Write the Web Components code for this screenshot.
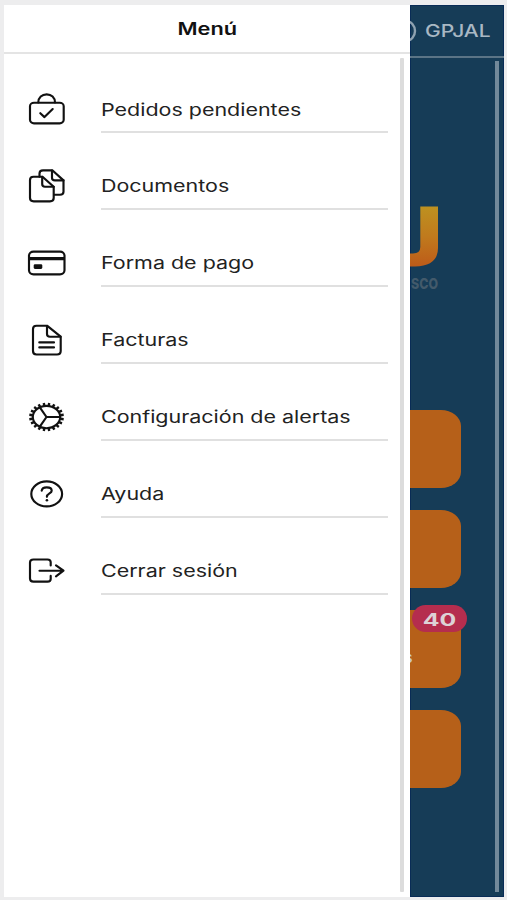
<!DOCTYPE html>
<html lang="es">
<head>
<meta charset="utf-8">
<title>Menú</title>
<style>
html,body{margin:0;height:100%}
body{background:#ededee;font-family:Inter,"Liberation Sans",sans-serif;overflow:hidden}
</style>
</head>
<body>
<app-shell>
  <side-drawer slot="drawer" heading="Menú">
    <menu-item icon="bag" style="--dy:.8px">Pedidos pendientes</menu-item>
    <menu-item icon="docs">Documentos</menu-item>
    <menu-item icon="card">Forma de pago</menu-item>
    <menu-item icon="file">Facturas</menu-item>
    <menu-item icon="gear">Configuración de alertas</menu-item>
    <menu-item icon="help">Ayuda</menu-item>
    <menu-item icon="exit">Cerrar sesión</menu-item>
  </side-drawer>
  <home-page slot="page">
    <home-tile></home-tile>
    <home-tile></home-tile>
    <home-tile badge="40">s</home-tile>
    <home-tile></home-tile>
  </home-page>
</app-shell>
<script>
const icons = {
  bag: '<rect x="3" y="12.7" width="33.7" height="20.6" rx="4" ry="3.5"/><path d="M11.3 12.5C11.3 7.500 15 4.300 19.700 4.300S28 7.500 28 12.500"/><path d="M13.300 23.200l4.200 3.900 8.200-8"/>',
  docs: '<path d="M12.500 9.700V6.500Q12.500 3.300 16 3.300H25.300L36.500 13.400V24.700Q36.500 27.700 33 27.700H27"/><path d="M25 3.500V10.700Q25 13.400 28 13.400H36.500"/><path d="M6.500 9.700H15.500L26.700 19.700V31Q26.700 34.300 23 34.300H6.700Q3 34.300 3 31V13Q3 9.700 6.500 9.700Z"/><path d="M15.200 9.900V17Q15.200 19.700 18 19.700H26.700"/>',
  card: '<rect x="2" y="7.600" width="35.500" height="22.700" rx="4.500" ry="4"/><path d="M2 14.600H37.500" stroke-width="3.400" stroke-linecap="butt"/><rect x="6.700" y="20.300" width="8.600" height="4.600" rx="1.300" fill="#111" stroke="none"/>',
  file: '<path d="M9.500 4.700H20L33.700 15.700V30Q33.700 33.500 30 33.500H9.500Q6 33.500 6 30V8Q6 4.700 9.500 4.700Z"/><path d="M20 5V13Q20 15.700 23 15.700H33.500M12.300 21.400H27M12.300 26.400H27"/>',
  gear: '<ellipse cx="19.500" cy="19" rx="13.700" ry="11.200"/><path d="M19.500 19H33M19.500 19L12.800 9.300M19.500 19L12.800 28.700"/>' +
    Array.from({length:20},(_,i)=>{const a=i*Math.PI/10+.157,c=Math.cos(a),s=Math.sin(a);
      return `<path stroke-width="2.400" stroke-linecap="butt" d="M${19.5+14*c} ${19+11.5*s}L${19.5+17.4*c} ${19+14.2*s}"/>`}).join(''),
  help: '<ellipse cx="19.700" cy="18.900" rx="15.400" ry="12.500"/><path d="M14.700 15.700C15 13.300 17.200 12.300 19.700 12.300C22.500 12.300 24.700 13.500 24.700 15.700C24.700 18.600 19.900 18.300 19.900 21.800"/><circle cx="19.900" cy="25.300" r="1.300" fill="#111" stroke="none"/>',
  exit: '<path d="M23.700 13.500V10.300Q23.700 7.500 20.500 7.500H6.500Q3 7.500 3 10.500V26.500Q3 29.600 6.500 29.600H20.500Q23.700 29.600 23.700 27V23.900M12.500 18.700H36M29 13.300L36.500 18.700L29 24.300"/>'
};
function define(name, render) {
  customElements.define(name, class extends HTMLElement {
    connectedCallback() {
      if (!this.shadowRoot) this.attachShadow({mode:'open'}).innerHTML = render(this);
    }
  });
}
define('app-shell', () => `<style>
  :host{display:grid;box-sizing:border-box;width:507px;height:900px;padding:5px 3px 3px 4px;grid-template-columns:406px 1fr}
  ::slotted(*){min-width:0}
</style><slot name="drawer"></slot><slot name="page"></slot>`);
define('side-drawer', el => `<style>
  :host{display:flex;flex-direction:column;height:892px;background:#fff}
  header{display:flex;justify-content:center;align-items:center;height:47px;border-bottom:2px solid #e4e4e4;font-size:17px;font-weight:600;color:#111}
  header span{transform:scaleX(1.28)}
  .body{display:flex;flex:1;padding:2px 6px 5px 0}
  nav{flex:1}
  .bar{width:4px;margin-top:2px;background:#dcdcdc;border-radius:1px}
</style><header><span>${el.getAttribute('heading')}</span></header>
<div class="body"><nav><slot></slot></nav><div class="bar"></div></div>`);
define('menu-item', el => `<style>
  :host{display:grid;grid-template-columns:40px 287px;column-gap:34px;padding-left:23px;height:77px;box-sizing:border-box}
  svg{display:block;margin-top:34px;fill:none;stroke:#111;stroke-width:2.150;stroke-linecap:round;stroke-linejoin:round}
  .label{display:flex;align-items:center;box-sizing:border-box;height:77px;padding-top:31px;border-bottom:2px solid #e0e0e0;font-size:17px;color:#222;white-space:nowrap}
  .label span{transform:translateY(var(--dy,0px)) scaleX(1.262);transform-origin:0 50%}
</style><svg width="40" height="40" viewBox="0 0 40 40">${icons[el.getAttribute('icon')]}</svg>
<div class="label"><span><slot></slot></span></div>`);
define('home-page', () => `<style>
  :host{display:flex;flex-direction:column;position:relative;overflow:hidden;width:94px;height:892px;background:#163c57;box-shadow:inset 0 0 0 1px #092c56}
  header{display:flex;align-items:center;box-sizing:border-box;height:53px;padding-top:1px;border-bottom:2px solid #5b7486;color:#a9b8c4;font-size:17px;font-weight:500}
  header svg{width:15px;height:24px;flex:none}
  header span{transform:scaleX(1.235);transform-origin:0 50%}
  .logo{height:352px;box-sizing:border-box;padding-top:148px}
  .logo svg{display:block}
  .tiles{display:flex;flex-direction:column;gap:22px;width:51px}
  .bar{position:absolute;right:5px;top:56px;width:4px;height:831px;background:#72899a}
</style><header><svg viewBox="0 0 15 24"><ellipse cx="-4" cy="12" rx="9" ry="10" fill="none" stroke="#8fa2b1" stroke-width="2.400"/></svg><span>GPJAL</span></header>
<div class="logo"><svg width="60" height="90" viewBox="0 0 60 90"><defs><linearGradient id="g" x1="0" y1="0" x2="0" y2="1"><stop offset="0" stop-color="#bd9120"/><stop offset=".5" stop-color="#c07a1d"/><stop offset="1" stop-color="#bd5b19"/></linearGradient></defs>
<path d="M10.300 .500H28V42Q28 60 5 60.500H0V47.500H3Q10.300 47.500 10.300 41Z" fill="url(#g)"/>
<text x="1" y="82.500" font-family="Inter,sans-serif" font-size="14.500" font-weight="800" fill="#435a6b" textLength="27" lengthAdjust="spacingAndGlyphs">SCO</text></svg></div>
<div class="tiles"><slot></slot></div><div class="bar"></div>`);
define('home-tile', el => `<style>
  :host{display:flex;align-items:center;position:relative;width:51px;height:78px;background:#b66019;border-radius:0 20px 20px 0/0 16px 16px 0;color:#cfc8c2;font-size:16px;font-weight:500}
  .text{margin:16px 0 0 -6px}
  .badge{position:absolute;left:2px;top:-5px;width:55px;height:27px;border-radius:14px;background:#b52d4e;color:#ddd2d6;font-size:17px;font-weight:700;display:flex;align-items:center;justify-content:center}
  .badge span{transform:translateY(.5px) scaleX(1.46)}
</style><span class="text"><slot></slot></span>${el.hasAttribute('badge') ? `<div class="badge"><span>${el.getAttribute('badge')}</span></div>` : ''}`);
</script>
</body>
</html>
